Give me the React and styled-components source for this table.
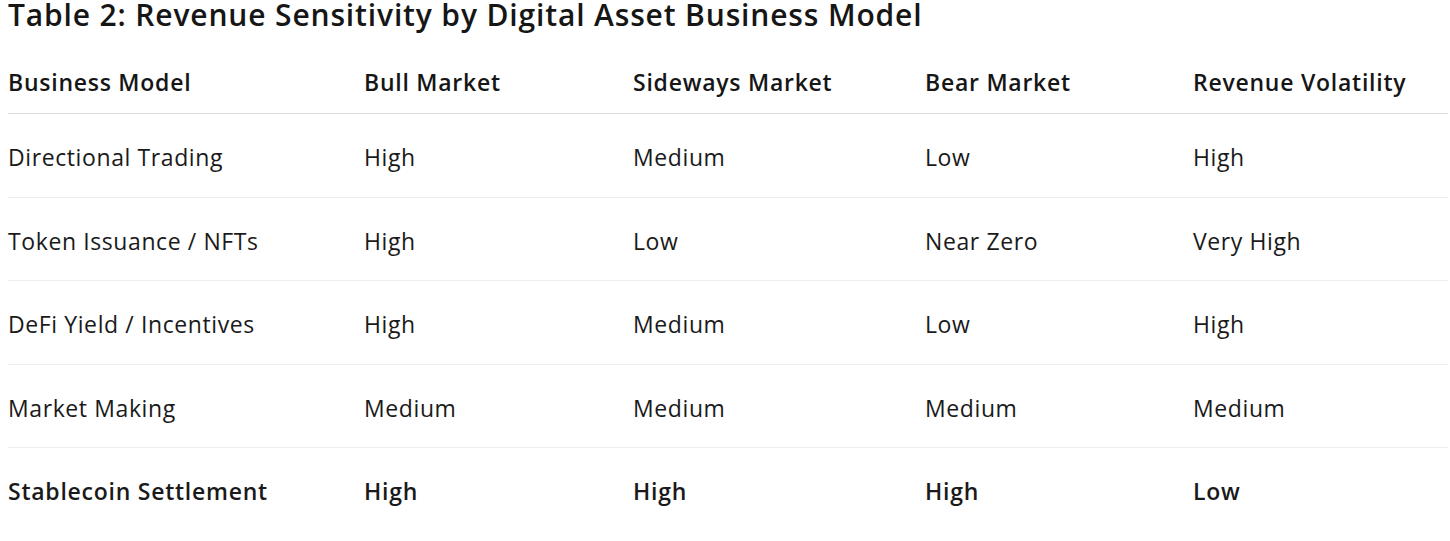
import React from "react";
import styled, { createGlobalStyle } from "styled-components";

const GlobalStyle = createGlobalStyle`
  html, body { margin: 0; padding: 0; background: #ffffff; }
  body {
    font-family: "Open Sans", "Noto Sans", "Liberation Sans", sans-serif;
    color: #1a1a1a;
  }
`;

const Page = styled.div`
  padding: 0 2px 0 8px;
`;

const Title = styled.h2`
  margin: 0 0 23px;
  padding-top: 2px;
  font-size: 30px;
  line-height: 26px;
  letter-spacing: 0.85px;
  font-weight: 600;
  color: #161616;
`;

const Table = styled.table`
  width: 1440px;
  border-collapse: collapse;
  table-layout: fixed;
`;

const HeadCell = styled.th`
  text-align: left;
  font-weight: 600;
  font-size: 23px;
  line-height: 30px;
  letter-spacing: 0.75px;
  padding: 16px 0 16px;
  border-bottom: 1px solid #dcdcdc;
  color: #161616;
`;

const Row = styled.tr`
  border-bottom: ${(p) => (p.$last ? "none" : "1px solid #ededed")};
`;

const Cell = styled.td`
  font-size: 23px;
  line-height: 30px;
  letter-spacing: ${(p) => (p.$bold ? "0.75px" : "0.6px")};
  padding: 28px 0 24.5px;
  font-weight: ${(p) => (p.$bold ? 600 : 400)};
  color: #1a1a1a;
`;

const widths = [356, 269, 292, 268, 255];
const headers = ["Business Model", "Bull Market", "Sideways Market", "Bear Market", "Revenue Volatility"];
const rows = [
  ["Directional Trading", "High", "Medium", "Low", "High"],
  ["Token Issuance / NFTs", "High", "Low", "Near Zero", "Very High"],
  ["DeFi Yield / Incentives", "High", "Medium", "Low", "High"],
  ["Market Making", "Medium", "Medium", "Medium", "Medium"],
  ["Stablecoin Settlement", "High", "High", "High", "Low"],
];

export default function App() {
  return (
    <Page>
      <GlobalStyle />
      <Title>Table 2: Revenue Sensitivity by Digital Asset Business Model</Title>
      <Table>
        <colgroup>
          {widths.map((w, i) => (
            <col key={i} style={{ width: w }} />
          ))}
        </colgroup>
        <thead>
          <tr>
            {headers.map((h) => (
              <HeadCell key={h}>{h}</HeadCell>
            ))}
          </tr>
        </thead>
        <tbody>
          {rows.map((r, i) => {
            const last = i === rows.length - 1;
            return (
              <Row key={i} $last={last}>
                {r.map((c, j) => (
                  <Cell key={j} $bold={last}>{c}</Cell>
                ))}
              </Row>
            );
          })}
        </tbody>
      </Table>
    </Page>
  );
}
